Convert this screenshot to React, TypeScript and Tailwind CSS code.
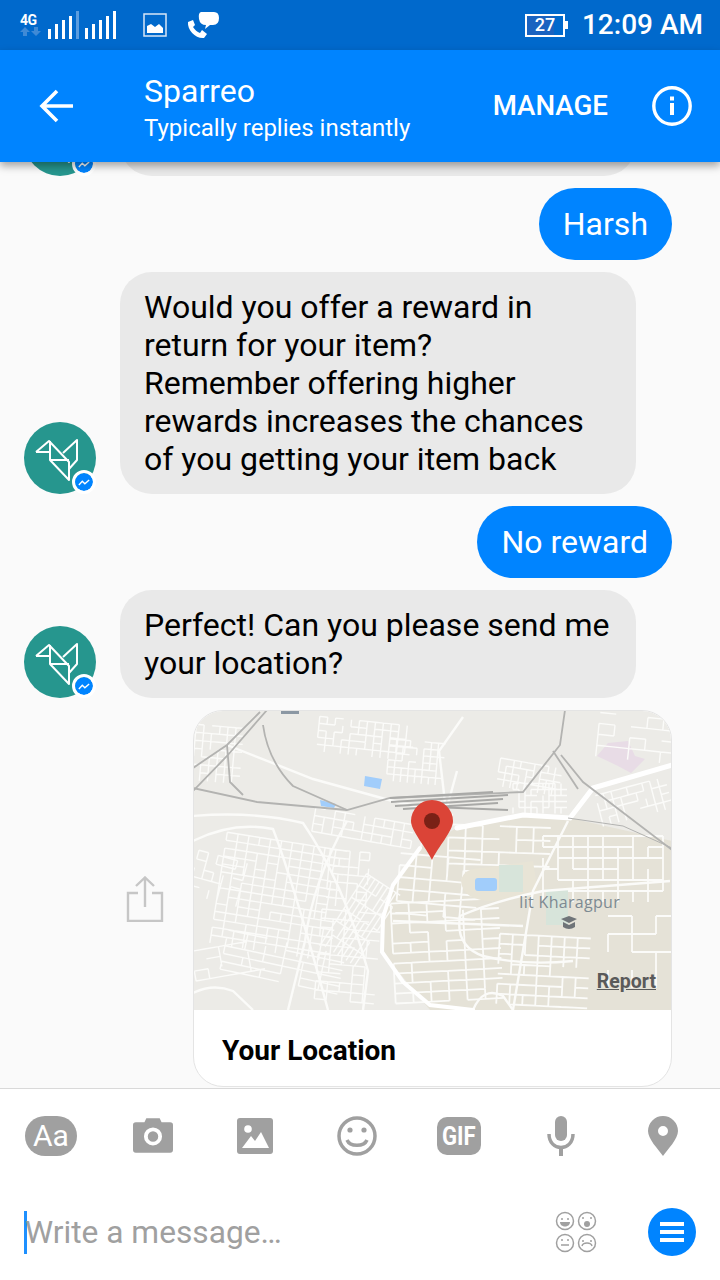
const font = { fontFamily: "Roboto, 'Liberation Sans', sans-serif" };

// small seeded random so the street grid stays the same on every render
function seeded(seed: number) {
  let s = seed;
  return () => {
    s = (s * 16807) % 2147483647;
    return s / 2147483647;
  };
}

function streets(cx: number, cy: number, w: number, h: number, angle: number, dx: number, dy: number, seed: number, keep = 0.85) {
  const rnd = seeded(seed);
  const a = (angle * Math.PI) / 180;
  const pt = (x: number, y: number) =>
    `${(cx + x * Math.cos(a) - y * Math.sin(a)).toFixed(1)} ${(cy + x * Math.sin(a) + y * Math.cos(a)).toFixed(1)}`;
  let d = "";
  for (let y = -h / 2; y <= h / 2; y += dy) {
    for (let x = -w / 2; x < w / 2; x += dx) {
      if (rnd() < keep) d += `M${pt(x, y)}L${pt(x + dx, y)}`;
    }
  }
  for (let x = -w / 2; x <= w / 2; x += dx) {
    for (let y = -h / 2; y < h / 2; y += dy) {
      if (rnd() < keep) d += `M${pt(x, y)}L${pt(x, y + dy)}`;
    }
  }
  return d;
}

const fineStreets = [
  streets(85, 185, 120, 110, 9, 11, 8, 11, 0.9),
  streets(85, 250, 110, 40, 12, 20, 8, 41, 0.8),
  streets(170, 205, 40, 75, 33, 5, 14, 12, 0.9),
  streets(155, 165, 40, 50, 5, 10, 8, 42, 0.7),
  streets(25, 165, 50, 40, 15, 10, 9, 20, 0.6),
  streets(22, 40, 42, 50, 5, 8, 8, 14, 0.8),
  streets(170, 25, 90, 30, 6, 8, 7, 15, 0.75),
  streets(220, 50, 50, 40, 5, 7, 7, 43, 0.7),
  streets(335, 65, 60, 26, 10, 7, 7, 16, 0.8),
  streets(345, 85, 50, 25, 0, 6, 6, 44, 0.7),
  streets(175, 118, 110, 24, 10, 10, 8, 45, 0.8),
  streets(150, 245, 50, 90, 5, 12, 9, 46, 0.7),
  streets(440, 90, 70, 30, -15, 8, 8, 47, 0.7),
  streets(440, 25, 70, 40, 6, 16, 11, 21, 0.7),
  streets(30, 250, 60, 30, -10, 14, 10, 48, 0.45),
].join("");

const campusStreets = [
  streets(250, 240, 100, 100, -3, 18, 10, 31, 0.85),
  streets(350, 260, 90, 70, 3, 13, 10, 32, 0.85),
  streets(300, 140, 90, 50, 2, 17, 13, 33, 0.8),
  streets(410, 155, 120, 60, 0, 15, 11, 34, 0.8),
  streets(240, 175, 70, 60, 5, 16, 12, 35, 0.75),
  streets(445, 235, 60, 60, 0, 24, 18, 36, 0.6),
].join("");

function MapImage() {
  return (
    <svg width="478" height="299" viewBox="1 0 478 299" className="block">
      <rect x="0" width="480" height="299" fill="#ecebe7" />
      <path d="M200 174L227 137L264 117L330 104L377 107L479 130V299H237L189 241L190 207Z" fill="#e5e2d7" />
      <path d="M415 32L435 30L442 45L452 48L438 62L425 55L404 45Z" fill="#e8dce6" />

      <path d={fineStreets} stroke="#fbfbf9" strokeWidth="1.4" fill="none" />
      <path d={campusStreets} stroke="#fbfbf9" strokeWidth="1.8" fill="none" />

      <path d="M268 170Q270 157 290 157L340 150L345 183L300 190Q270 190 268 170Z" fill="#e8e4d6" />
      <path d="M306 154H330V181H306Z" fill="#d7e4da" />
      <path d="M353 178H375V214H353Z" fill="#d7e4da" />
      <rect x="282" y="167" width="22" height="13" rx="3" fill="#a1cdfb" />
      <path d="M172 65L189 68L187 78L171 75Z" fill="#a1cdfb" />
      <path d="M127 89L143 93L141 97L128 95Z" fill="#a1cdfb" />
      <path d="M88 0H106V3H88Z" fill="#8b97a3" />

      <g stroke="#fbfbf9" fill="none" strokeWidth="2.4">
        <path d="M0 105Q60 100 110 112Q150 170 175 260L170 299" />
        <path d="M0 130Q40 110 80 118Q100 170 135 299" />
        <path d="M154 110Q120 170 112 230L95 299" />
        <path d="M34 34L120 68L196 89L260 104" />
        <path d="M264 60L253 100L246 40L270 6" />
        <path d="M375 110L340 180L320 299" />
        <path d="M267 205Q262 235 290 245Q330 255 380 250" />
        <path d="M267 205Q300 190 350 180L477 170" />
        <path d="M200 210L330 215" />
        <path d="M0 282Q20 272 40 280L60 299" />
        <path d="M280 299Q290 275 310 285L320 299" />
      </g>
      <g stroke="#ffffff" fill="none" strokeLinecap="round">
        <path d="M479 54L400 77L377 107L330 104L264 117" strokeWidth="5" />
        <path d="M227 137L200 174L190 207L189 241L210 271L237 294L280 299" strokeWidth="4" />
      </g>
      <g stroke="#b3b3b1" fill="none" strokeWidth="1.8">
        <path d="M-3 59L34 34L67 1" />
        <path d="M0 80L34 45L74 -1" />
        <path d="M0 77L64 91L154 99L197 87L330 81L367 34L372 -1" />
        <path d="M70 14Q75 50 100 75L154 99" />
        <path d="M34 34L37 71L50 84" />
        <path d="M368 44L390 71L479 139" />
        <path d="M360 40L385 78" />
        <path d="M375 107L430 115L479 137" strokeWidth="1" />
      </g>
      <g stroke="#a9a9a7" fill="none" strokeWidth="2">
        <path d="M197 87L300 81" />
        <path d="M198 91L315 84" />
        <path d="M202 95L310 88" />
        <path d="M210 98L305 92" />
        <path d="M240 96L315 99" />
      </g>
      <path d="M239 149C233 136 218 120 218 110A21 21 0 0 1 260 110C260 120 245 136 239 149Z" fill="#db4437" />
      <circle cx="239" cy="110" r="8" fill="#7a2116" />
      <path d="M368 208L376 212L384 208L376 205Z M370 211V216Q376 220 382 216V211L376 214Z" fill="#6f7478" />
    </svg>
  );
}

function BotAvatar() {
  return (
    <div className="relative w-[72px] h-[72px] shrink-0 rounded-full bg-[#26968e]">
      <svg width="72" height="72" viewBox="0 0 72 72" fill="none" stroke="#fff" strokeWidth="2" strokeLinejoin="round">
        <path d="M12 30L25 19L45 40V58L26 38V19M12 30H27M26 38H45M39 31L53 18V38L45 47" />
      </svg>
      <div className="absolute right-[3px] bottom-[3px] w-[18px] h-[18px] rounded-full bg-[#0084ff] outline-[3px] outline-white flex items-center justify-center">
        <svg width="12" height="9" viewBox="0 0 14 10" fill="none" stroke="#fff" strokeWidth="1.6">
          <path d="M1 8L5 3.500L8 6.500L13 2" />
        </svg>
      </div>
    </div>
  );
}

function BotBubble({ lines }: { lines: string[] }) {
  return (
    <div className="flex items-end pl-6">
      <BotAvatar />
      <div className="ml-6 w-[516px] min-h-[72px] rounded-[32px] bg-[#e9e9e9] px-6 py-4 text-[32px] leading-[38px] text-black">
        {lines.map((l) => (
          <div key={l} className="whitespace-nowrap">{l}</div>
        ))}
      </div>
    </div>
  );
}

function UserBubble({ text }: { text: string }) {
  return (
    <div className="flex justify-end pr-12">
      <div className="h-[72px] rounded-[36px] bg-[#0084ff] px-6 flex items-center text-[32px] text-white">{text}</div>
    </div>
  );
}

function StatusBar() {
  return (
    <div className="h-[50px] shrink-0 bg-[#0069cc] flex items-center text-white relative">
      <div className="ml-5 w-[23px] flex flex-col">
        <span className="text-[14px] leading-[14px] font-bold tracking-[-0.5px]">4G</span>
        <svg width="21" height="11" viewBox="0 0 21 11" fill="#3f8ad6" className="-mt-[1px]">
          <path d="M5 1L10 6H7V10H3V6H0Z M16 10L21 5H18V1H14V5H11Z" />
        </svg>
      </div>
      <svg width="70" height="30" viewBox="0 0 70 30" fill="#fff" className="ml-[4px]">
        <rect x="1" y="19" width="3" height="10" />
        <rect x="8" y="14" width="3" height="15" />
        <rect x="15" y="10" width="3" height="19" />
        <rect x="22" y="6" width="3" height="23" />
        <rect x="29" y="1" width="3" height="28" fill="#5b9de0" />
        <rect x="38" y="18" width="3" height="11" />
        <rect x="45" y="14" width="3" height="15" />
        <rect x="52" y="10" width="3" height="19" />
        <rect x="59" y="6" width="3" height="23" />
        <rect x="66" y="1" width="3" height="28" />
      </svg>
      <svg width="24" height="24" viewBox="0 0 24 24" className="ml-[26px]">
        <rect x="1" y="1" width="22" height="22" fill="none" stroke="#d7e6f6" strokeWidth="1.5" />
        <path d="M4 20V13L8 11L12 14L16 11L20 15V20Z" fill="#fff" />
      </svg>
      <svg width="33" height="30" viewBox="0 0 33 30" fill="#fff" className="ml-[20px]">
        <path d="M14 2H27Q32 2 32 8Q32 15 26 15H23L18 19L19 15Q13 15 12 9Q11 3 14 2Z" />
        <path d="M1 12L6 10L8 15L6 17C8 20 10 22 13 23L15 20L20 24L17 28C9 29 0 20 1 12Z" />
      </svg>
      <div className="ml-auto flex items-center">
        <div className="relative w-[40px] h-[23px] border-2 border-white flex items-center justify-center bg-[linear-gradient(90deg,#1a63c0_75%,transparent_75%)] text-[18px] leading-none font-medium">
          27
          <div className="absolute right-[-5px] top-[5px] w-[3px] h-2 bg-white" />
        </div>
        <span className="ml-[17px] mr-[17px] text-[28px] font-medium">12:09 AM</span>
      </div>
    </div>
  );
}

function Header() {
  return (
    <div className="relative z-10 h-[112px] shrink-0 bg-[#0084ff] flex items-center text-white shadow-[0_4px_8px_rgba(0,0,0,0.35)]">
      <div className="w-[144px] shrink-0 pl-[39px]">
        <svg width="36" height="36" viewBox="0 0 36 36" fill="none" stroke="#fff" strokeWidth="3.600">
          <path d="M34 18H4M18 3L3 18L18 33" />
        </svg>
      </div>
      <div className="flex-1 pt-1">
        <div className="text-[32px] leading-[40px]">Sparreo</div>
        <div className="text-[24px] leading-[34px] whitespace-nowrap">Typically replies instantly</div>
      </div>
      <span className="text-[27.700px] font-medium">MANAGE</span>
      <svg width="40" height="40" viewBox="0 0 40 40" fill="none" className="ml-[44px] mr-[28px]">
        <circle cx="20" cy="20" r="18.200" stroke="#fff" strokeWidth="3.400" />
        <rect x="18" y="17" width="4" height="12" fill="#fff" />
        <rect x="18" y="10.500" width="4" height="4" fill="#fff" />
      </svg>
    </div>
  );
}

function LocationCard() {
  return (
    <div className="flex items-center pl-[126px] pr-12">
      <svg width="38" height="46" viewBox="0 0 38 46" fill="none" stroke="#c6c6c6" strokeWidth="2.400">
        <path d="M12 17H2V45H36V17H26M19 31V2M10 10L19 1.500L28 10" />
      </svg>
      <div className="ml-[29px] w-[479px] rounded-[30px] overflow-hidden border border-[#e4e4e4] bg-white">
        <div className="relative">
          <MapImage />
          <span className="absolute left-[325px] top-[181px] text-[16px] leading-5 text-[#7d8a92] tracking-[0.3px]" style={{ fontFamily: "'Open Sans', sans-serif" }}>
            Iit Kharagpur
          </span>
          <span className="absolute right-[15px] bottom-[16px] text-[19.500px] leading-6 font-bold underline text-[#5a5a5a]">Report</span>
        </div>
        <div className="h-[76px] pl-[28px] pt-[5px] flex items-center text-[28px] font-bold text-black">Your Location</div>
      </div>
    </div>
  );
}

function Composer() {
  const g = "#a0a0a0";
  return (
    <div className="h-[192px] shrink-0 bg-white border-t border-[#d9d9d9]">
      <div className="h-[95px] pb-[2px] grid grid-cols-[repeat(7,102px)] items-center justify-items-center">
        <div className="w-[52px] h-10 rounded-[20px] bg-[#a0a0a0] flex items-center justify-center text-white text-[30px] leading-none">Aa</div>
        <svg width="40" height="37" viewBox="0 0 42 38">
          <path fillRule="evenodd" fill={g} d="M3 5H12L14 1H28L30 5H39A3 3 0 0 1 42 8V34A3 3 0 0 1 39 37H3A3 3 0 0 1 0 34V8A3 3 0 0 1 3 5ZM21 10.500A9.500 9.500 0 1 0 21 29.500A9.500 9.500 0 1 0 21 10.500ZM21 14.500A5.500 5.500 0 1 1 21 25.500A5.500 5.500 0 1 1 21 14.500Z" />
        </svg>
        <svg width="36" height="36" viewBox="0 0 36 36">
          <rect width="36" height="36" rx="3" fill={g} />
          <circle cx="11" cy="11" r="3.800" fill="#fff" />
          <path d="M5 30L14 18L18 23L24 14L32 30Z" fill="#fff" />
        </svg>
        <svg width="40" height="40" viewBox="0 0 40 40" fill="none" stroke={g} strokeWidth="3.500">
          <circle cx="20" cy="20" r="18" />
          <circle cx="13" cy="14" r="2.600" fill={g} stroke="none" />
          <circle cx="27" cy="14" r="2.600" fill={g} stroke="none" />
          <path d="M10 24C13 31 27 31 30 24" />
        </svg>
        <div className="w-11 h-[38px] rounded-[10px] bg-[#a0a0a0] flex items-center justify-center text-white text-[26px] leading-none font-bold">
          <span className="scale-x-[0.85]">GIF</span>
        </div>
        <svg width="28" height="40" viewBox="0 0 28 40" fill="none">
          <rect x="8" y="0" width="12" height="25" rx="6" fill={g} />
          <path d="M2 18C2 36 26 36 26 18" stroke={g} strokeWidth="3.500" />
          <rect x="12" y="30" width="4" height="10" fill={g} />
        </svg>
        <svg width="30" height="40" viewBox="0 0 30 40">
          <path fillRule="evenodd" fill={g} d="M15 0A15 15 0 0 1 30 15C30 23 20 33 15 40C10 33 0 23 0 15A15 15 0 0 1 15 0ZM15 10A5 5 0 1 0 15 20A5 5 0 1 0 15 10Z" />
        </svg>
      </div>
      <div className="h-[96px] flex items-center pl-6 pr-6">
        <div className="w-[3px] h-[43px] bg-[#1e90ff]" />
        <span className="-ml-[2px] pt-[2px] text-[31.700px] text-[#a0a0a0]">Write a message…</span>
        <svg width="42" height="42" viewBox="0 0 42 42" fill="none" stroke={g} strokeWidth="1.500" className="ml-auto mr-[51px]">
          <circle cx="10" cy="10" r="8.500" />
          <circle cx="32" cy="10" r="8.500" />
          <circle cx="10" cy="32" r="8.500" />
          <circle cx="32" cy="32" r="8.500" />
          <path d="M5 11H15C15 17 5 17 5 11Z" fill={g} stroke="none" />
          <circle cx="32" cy="13" r="3" fill={g} stroke="none" />
          <path d="M6 34H14M27 35C28 31 36 31 37 35" />
          <path d="M6 8H8M12 8H14M6 29H8M12 29H14M27 30H29M35 30H37M27 7H29M35 7H37" />
        </svg>
        <div className="w-12 h-12 rounded-full bg-[#0084ff] flex flex-col items-center justify-center gap-[4px]">
          <div className="w-6 h-1 bg-white" />
          <div className="w-6 h-1 bg-white" />
          <div className="w-6 h-1 bg-white" />
        </div>
      </div>
    </div>
  );
}

export default function App() {
  return (
    <div className="w-[720px] h-[1280px] flex flex-col overflow-hidden bg-[#fafafa]" style={font}>
      <StatusBar />
      <Header />
      {/* Messages are anchored to the bottom, older ones clip under the header */}
      <div className="flex-1 min-h-0 flex flex-col justify-end gap-3 overflow-hidden pb-[1px]">
        <BotBubble lines={[]} />
        <UserBubble text="Harsh" />
        <BotBubble
          lines={[
            "Would you offer a reward in",
            "return for your item?",
            "Remember offering higher",
            "rewards increases the chances",
            "of you getting your item back",
          ]}
        />
        <UserBubble text="No reward" />
        <BotBubble lines={["Perfect! Can you please send me", "your location?"]} />
        <LocationCard />
      </div>
      <Composer />
    </div>
  );
}
